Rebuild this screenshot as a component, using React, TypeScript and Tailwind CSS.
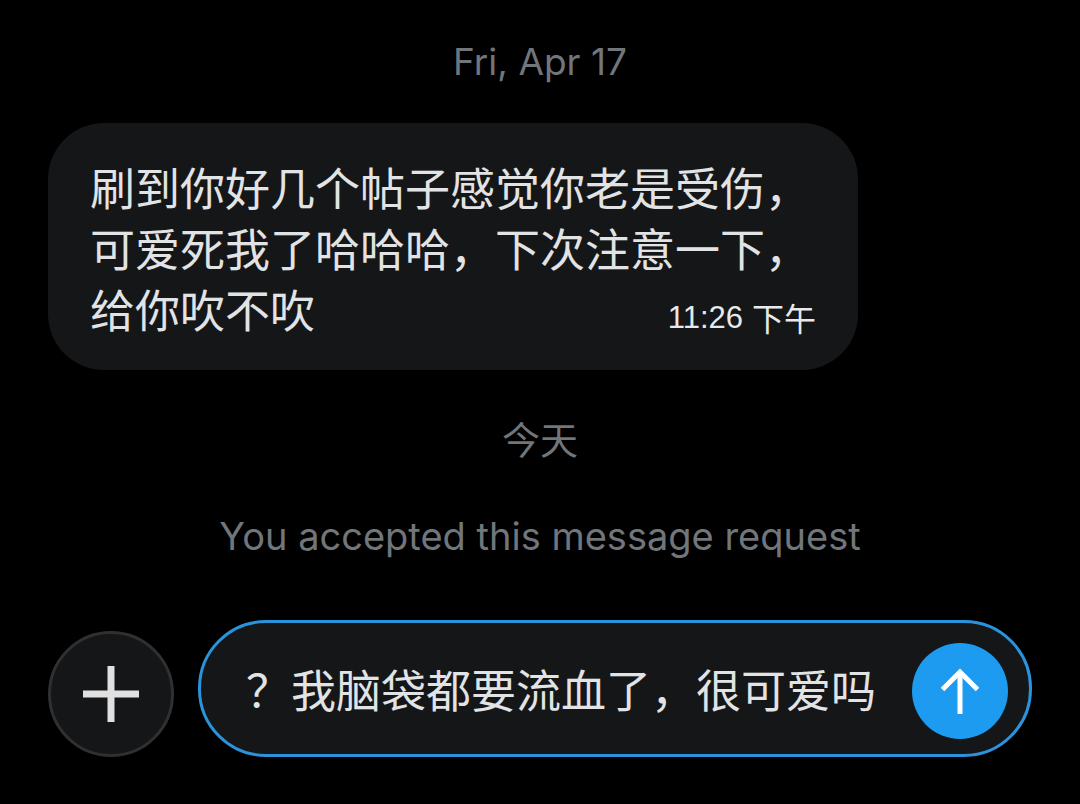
const latin = "font-['Inter','Noto_Sans_CJK_SC',sans-serif]";
const cjk = "font-['Noto_Sans_CJK_SC',sans-serif]";

export default function App() {
  return (
    <div className={`w-[1080px] h-[804px] bg-black flex flex-col overflow-hidden ${latin}`}>
      <div className="pt-[38px] text-center text-[37px] leading-[48px] text-[#71767b]">Fri, Apr 17</div>

      <div className="mt-[37px] ml-[48px] w-[810px] h-[247px] rounded-[56px] bg-[#151618] pl-[42px] pr-[42px] pt-[33px] relative">
        <div className={`text-[45px] leading-[61px] text-[#e2e3e4] whitespace-nowrap ${cjk}`}>
          <div>刷到你好几个帖子感觉你老是受伤，</div>
          <div>可爱死我了哈哈哈，下次注意一下，</div>
          <div>给你吹不吹</div>
        </div>
        <div className="absolute right-[42px] bottom-[32px] leading-[40px] text-[#e7e9ea] flex items-center gap-[9px]">
          <span className="text-[31px] font-['Liberation_Sans',sans-serif]">11:26</span>
          <span className={`text-[32px] -mt-[3px] ${cjk}`}>下午</span>
        </div>
      </div>

      <div className={`mt-[44px] text-center text-[38px] leading-[48px] text-[#71767b] ${cjk}`}>今天</div>
      <div className="mt-[49px] text-center text-[38px] leading-[50px] text-[#71767b]">You accepted this message request</div>

      <div className="mt-[59px] ml-[48px] flex items-end gap-[24px]">
        <div className="w-[126px] h-[126px] rounded-full bg-[#151618] border-[3px] border-[#2f3032] flex items-center justify-center">
          <svg width="56" height="56" viewBox="0 0 56 56">
            <rect x="24.5" y="0" width="7" height="56" fill="#e0e0e0" />
            <rect x="0" y="24.5" width="56" height="7" fill="#e0e0e0" />
          </svg>
        </div>
        <div className="w-[834px] h-[137px] rounded-[68px] bg-[#151618] border-[3px] border-[#2a93dc] flex items-center pl-[45px] pr-[21px] justify-between">
          <span className={`text-[45px] leading-[56px] text-[#e2e3e4] whitespace-nowrap ${cjk}`}>？我脑袋都要流血了，很可爱吗</span>
          <div className="w-[96px] h-[96px] rounded-full bg-[#1d9bf0] flex items-center justify-center shrink-0 mt-[4px]">
            <svg width="40" height="46" viewBox="0 0 40 46" fill="none" stroke="#ffffff" strokeWidth="5">
              <path d="M20 3V46" />
              <path d="M2.5 21.5L20 4L37.5 21.5" />
            </svg>
          </div>
        </div>
      </div>
    </div>
  );
}
